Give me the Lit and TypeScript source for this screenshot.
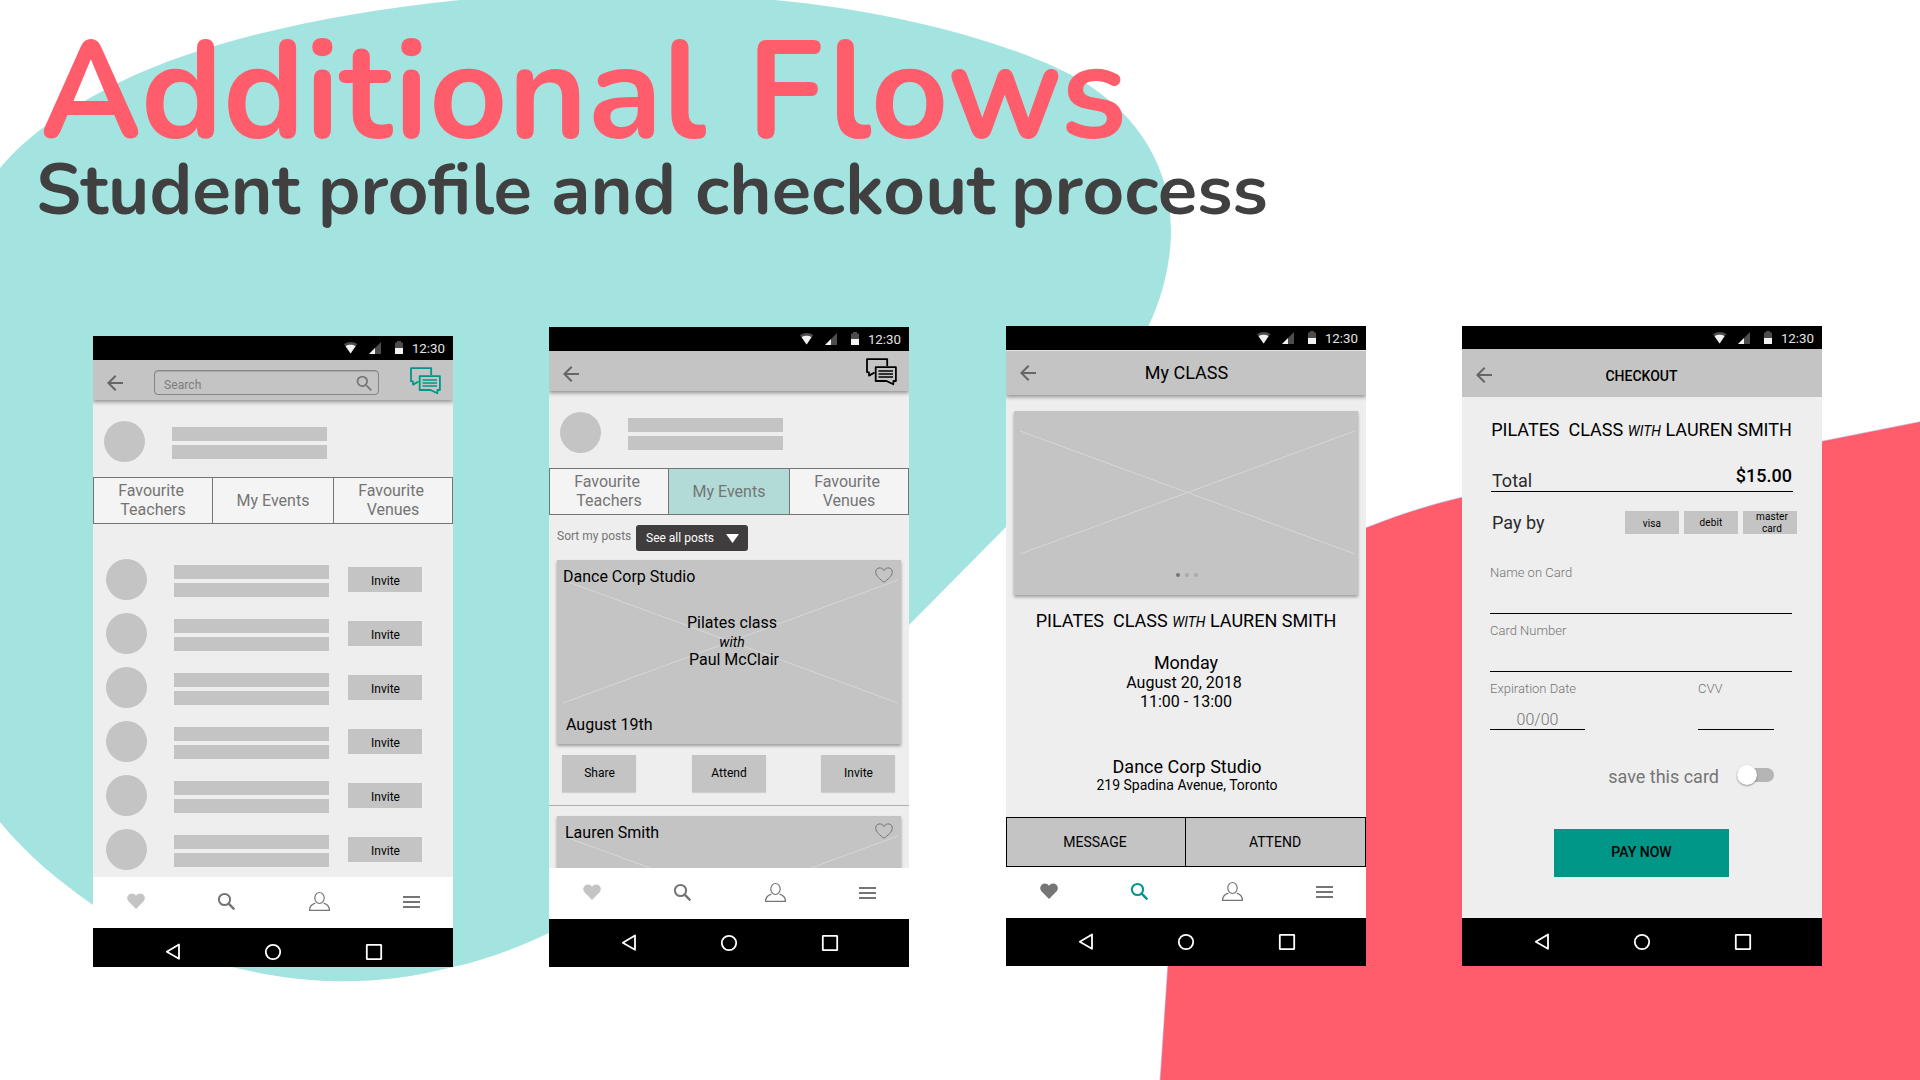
import { LitElement, html, svg, css, nothing, TemplateResult } from "lit";
import { customElement, property } from "lit/decorators.js";

const arrow = svg`<path d="M20 11H7.83l5.59-5.59L12 4l-8 8 8 8 1.41-1.41L7.83 13H20z"/>`;
const magnifier = svg`<path d="M15.5 14h-.79l-.28-.27A6.471 6.471 0 0 0 16 9.5 6.5 6.5 0 1 0 9.5 16c1.61 0 3.09-.59 4.23-1.57l.27.28v.79l5 4.99L20.49 19zm-6 0C7.01 14 5 11.99 5 9.5S7.01 5 9.5 5 14 7.01 14 9.5 11.99 14 9.5 14z"/>`;

@customElement("status-bar")
class StatusBar extends LitElement {
  static styles = css`
    :host { display: block; height: 100%; background: #000; }
    .bar { height: 24px; display: flex; justify-content: flex-end; padding-right: 8px; align-items: center; font: 13.3px/24px Roboto, "Liberation Sans", sans-serif; color: #e4e4e4; }
    .bar span { padding-top: 1px; }
    svg { width: 66px; height: 24px; margin-right: 3.5px; flex: none; }
  `;
  render() {
    return html`<div class="bar">
      <svg viewBox="0 0 66 24">
        <path d="M2 8.300C6 5.200 12 5.200 15.200 8.300L8.600 17.600z" fill="#4d4d4d"/>
        <path d="M3.600 10.200C6.500 8.300 10.800 8.300 13.500 10.200L8.600 17.600z" fill="#f2f2f2"/>
        <path d="M27 18 39 6v12z" fill="#4d4d4d"/>
        <path d="M27 18 33 12v6z" fill="#f2f2f2"/>
        <path d="M53 6.500h2V5h4v1.500h2V12h-8z" fill="#4d4d4d"/>
        <path d="M53 12h8v6h-8z" fill="#f2f2f2"/>
      </svg><span>12:30</span></div>`;
  }
}

@customElement("system-nav")
class SystemNav extends LitElement {
  static styles = css`
    :host { display: block; background: #000; }
    svg { display: block; width: 360px; height: 48px; }
  `;
  render() {
    return html`<svg viewBox="0 0 360 48" fill="none" stroke="#fff" stroke-width="1.800" stroke-linejoin="round">
      <path d="M86 16.500v14.300L73.800 23.700z"/><circle cx="180" cy="24" r="7.200"/><rect x="273.800" y="16.800" width="14.400" height="14.400" rx=".5"/>
    </svg>`;
  }
}

@customElement("tab-nav")
class TabNav extends LitElement {
  @property() heart = "#c4c4c4";
  @property() search = "#757575";
  static styles = css`
    :host { display: block; height: 51px; background: #fff; }
    .icons { display: block; width: 360px; height: 51px; }
  `;
  render() {
    return html`<svg class="icons" viewBox="0 0 360 51">
      <g transform="translate(32 13.400) scale(.92)" fill=${this.heart}><path d="M12 20.300 3.700 11.700C1.900 9.500 2 6.500 4 4.600 6.400 2.500 10 2.800 12 5.800 14 2.800 17.600 2.500 20 4.600 22 6.500 22.100 9.500 20.300 11.700z"/></g>
      <g fill="none" stroke=${this.search} stroke-width="2"><circle cx="131.500" cy="22.500" r="5.600"/><path d="M135.700 26.700 141.300 32.300" stroke-width="2.400"/></g>
      <g fill="none" stroke="#757575" stroke-width="1.200"><ellipse cx="226.500" cy="21" rx="4.700" ry="5.500"/><path d="M222.400 26.200C218 27.500 216.600 29.500 216.600 33.300H236.400C236.400 29.500 235 27.500 230.600 26.200"/></g>
      <path d="M310 19h17v2h-17zm0 5h17v2h-17zm0 5h17v2h-17z" fill="#757575"/>
    </svg>`;
  }
}

@customElement("app-root")
class AppRoot extends LitElement {
  static styles = css`
    :host { display: block; }
    * { box-sizing: border-box; }
    .slide { position: relative; width: 1920px; height: 1080px; overflow: hidden; background: #fff; font-family: Roboto, "Liberation Sans", sans-serif; color: #000; }
    .backdrop { position: absolute; inset: 0; }
    .content { position: relative; }
    .heads { display: block; width: 1400px; height: 326px; overflow: visible; }
    .heads text { font-family: Nunito, Lato, sans-serif; font-weight: 700; }
    .phones { display: flex; align-items: flex-start; padding-left: 93px; gap: 96px; height: 660px; }
    .phone { width: 360px; height: 640px; background: #eee; display: flex; flex-direction: column; flex: none; overflow: hidden; }
    .p1 { height: 631px; margin-top: 10px; }
    .p2 { margin-top: 1px; }
    .p3 { margin-left: 1px; }
    .status { height: 24px; flex: none; }
    .status4 { height: 23px; }
    system-nav { flex: none; height: 48px; overflow: hidden; }
    .p1 system-nav { height: 39px; }
    tab-nav { flex: none; }
    .appbar { background: #c4c4c4; height: 40px; flex: none; display: flex; align-items: center; box-shadow: 0 2px 4px rgba(0,0,0,.4); position: relative; padding: 6px 12px 0 10px; }
    .back { width: 24px; height: 24px; fill: #666; flex: none; }
    .search { width: 225px; height: 25px; margin: 0 0 1px 27px; border: 1px solid #858585; border-radius: 4px; box-shadow: inset 0 1px 1px #aaa; display: flex; align-items: center; justify-content: space-between; padding: 0 3px 0 9px; color: #7c7c7c; font-size: 12px; letter-spacing: .1px; }
    .search span { padding-top: 4px; }
    .search svg { width: 21px; height: 21px; fill: #777; margin-top: 1px; }
    .chat { width: 32px; height: 30px; margin-left: auto; margin-top: -4px; color: #009688; }
    .dark { color: #000; }
    .main { flex: 1; min-height: 0; overflow: hidden; display: flex; flex-direction: column; }
    .profile { display: flex; align-items: center; gap: 27px; padding-left: 11px; margin-top: 21px; height: 41px; flex: none; }
    .avatar { width: 41px; height: 41px; border-radius: 50%; background: #c4c4c4; }
    .lines { width: 155px; display: flex; flex-direction: column; gap: 4px; margin-top: 3px; }
    .lines i { height: 14px; background: #c4c4c4; }
    .tabs { display: grid; grid-template-columns: 118px 121px 119px; border: 1px solid #757575; height: 47px; margin-top: 15px; flex: none; color: #757575; font-size: 16px; line-height: 19px; text-align: center; }
    .tabs div { background: #f4f4f4; display: flex; align-items: center; justify-content: center; padding-bottom: 1px; }
    .tabs div + div { border-left: 1px solid #757575; }
    .tabs .on { background: #b2dbd7; }
    .people { display: flex; flex-direction: column; gap: 13px; padding: 35px 0 0 13px; }
    .person { display: flex; height: 41px; gap: 27px; flex: none; }
    .person .lines { margin-top: 6px; }
    .btn { width: 74px; height: 25px; background: #c4c4c4; font-size: 12px; line-height: 28px; text-align: center; padding-left: 1px; }
    .person .btn { margin: 8px 0 0 -8px; }
    .sort { display: flex; height: 26px; margin: 10px 0 9px 8px; flex: none; font-size: 12px; color: #757575; line-height: 23px; }
    .sort span { width: 79px; }
    .drop { width: 112px; background: #403d3e; border-radius: 3px; color: #fff; display: flex; justify-content: space-between; align-items: center; padding: 1px 9px 0 10px; }
    .drop svg { width: 13px; height: 9px; fill: #fff; }
    .card { position: relative; width: 344px; height: 184px; margin-left: 8px; background: #c4c4c4; box-shadow: 0 2px 3px rgba(0,0,0,.35); flex: none; }
    .cross { position: absolute; inset: 0; width: 344px; height: 184px; }
    .card-body { position: relative; display: flex; flex-direction: column; height: 100%; font-size: 16px; line-height: 18px; padding: 8px 8px 10px 6px; }
    .row { display: flex; justify-content: space-between; }
    .inset { padding-left: 2px; }
    .fav { width: 18px; height: 16px; margin-top: -1px; }
    .mid { text-align: center; margin: 28px 0 0 8px; }
    .mid em { display: block; font-size: 14px; line-height: 20px; margin-bottom: -1px; }
    .mid span { padding-left: 4px; }
    .when { margin-top: auto; padding-left: 3px; }
    .actions { display: flex; justify-content: space-between; padding: 11px 14px 0 13px; height: 62px; border-bottom: 1px solid #aeaeae; flex: none; margin-bottom: 10px; }
    .actions .btn { height: 37px; line-height: 36px; box-shadow: 0 1px 1px rgba(0,0,0,.12); }
    .bar3 { height: 44px; padding-top: 0; margin-top: 1px; }
    .title { flex: 1; text-align: center; font-size: 18px; padding: 0 21px 1px 0; }
    .t4 { font-size: 14px; font-weight: 500; padding: 2px 23px 0 0; }
    .bar4 { height: 48px; box-shadow: none; padding-top: 4px; }
    .hero { margin-top: 16px; margin-bottom: 15px; }
    .dots { position: absolute; left: 162px; top: 162px; display: flex; gap: 5px; }
    .dots i { width: 4px; height: 4px; border-radius: 50%; background: #aaa; }
    .dots i:first-child { background: #757575; }
    .class { font-size: 18px; line-height: 22px; text-align: center; white-space: pre; flex: none; }
    .class em { font-size: 14px; }
    .details { text-align: center; flex: 1; font-size: 16px; line-height: 19px; padding-top: 19px; }
    .details .big { font-size: 18px; line-height: 21px; }
    .venue { padding: 45px 0 0 2px; font-size: 14px; line-height: 16px; }
    .two { display: grid; grid-template-columns: 178px 180px; height: 50px; border: 1px solid #000; background: #c4c4c4; font-size: 14px; text-align: center; line-height: 49px; flex: none; }
    .two div { padding-right: 2px; }
    .two div + div { border-left: 1px solid #000; padding-right: 1px; }
    .form { padding: 22px 25px 0 28px; }
    .form .class { margin-left: -4px; }
    .total { display: flex; justify-content: space-between; flex: none; width: 302px; height: 42px; border-bottom: 1px solid #000; font-size: 18px; margin: 8px 0 0 1px; padding: 15px 1px 0 1px; color: #2b2b2b; }
    .total span { line-height: 32px; }
    .total b { font-weight: 500; line-height: 22px; color: #000; }
    .pay { display: flex; margin-top: 19px; height: 23px; gap: 5px; font-size: 18px; color: #2b2b2b; line-height: 24px; flex: none; }
    .pay span { width: 130px; padding-left: 2px; }
    .pay div { width: 54px; background: #c4c4c4; color: #000; font-size: 10px; line-height: 12px; text-align: center; display: flex; align-items: center; justify-content: center; letter-spacing: .1px; }
    .pay .low { padding-top: 2px; }
    .pay .wide { padding-left: 4px; }
    .label { font-size: 13px; font-weight: 300; color: #757575; line-height: 18px; }
    .field { width: 302px; border-bottom: 1px solid #000; flex: none; }
    .f1 { height: 50px; margin: 30px 0 0 0; }
    .f2 { height: 50px; margin-top: 8px; }
    .pair { display: flex; justify-content: space-between; width: 284px; margin-top: 9px; height: 49px; flex: none; }
    .pair .label { line-height: 16px; }
    .exp { width: 95px; border-bottom: 1px solid #000; }
    .cvv { width: 76px; border-bottom: 1px solid #000; }
    .exp p { margin: 13px 0 0; font-size: 16px; line-height: 20px; text-align: center; font-weight: 300; color: #757575; }
    .save { display: flex; justify-content: flex-end; width: 284px; margin-top: 35px; font-size: 18px; line-height: 24px; color: #757575; gap: 18px; height: 24px; flex: none; }
    .toggle { width: 37px; height: 14px; border-radius: 7px; background: #b5b5b5; margin-top: 3px; }
    .toggle i { display: block; width: 20px; height: 20px; border-radius: 50%; background: #fff; margin-top: -3px; box-shadow: 0 1px 2px rgba(0,0,0,.4); }
    .paynow { width: 175px; height: 48px; background: #009688; margin: 40px 0 0 64px; text-align: center; font-size: 14px; line-height: 46px; font-weight: 500; flex: none; }
  `;

  private backIcon() { return html`<svg class="back" viewBox="0 0 24 24">${arrow}</svg>`; }

  private chatIcon(dark = false) {
    return html`<svg class="chat ${dark ? "dark" : ""}" viewBox="0 0 32 30" fill="none" stroke="currentColor" stroke-width="1.800" stroke-linejoin="round">
      <path d="M22.200 9V2.200H2V15.200L4 15.400V18.600L9.600 15.500"/><path d="M10.700 10.200H30.900V24H28.500L28.300 27.300 21.500 24H10.700z"/><path d="M13.500 14h14.500M13.500 17h14.500M13.500 20h14.500" stroke-width="1.400"/>
    </svg>`;
  }

  private lines() { return html`<div class="lines"><i></i><i></i></div>`; }
  private profile() { return html`<div class="profile"><div class="avatar"></div>${this.lines()}</div>`; }
  private tabs(active = false) {
    return html`<div class="tabs"><div>Favourite&nbsp;<br>Teachers</div><div class=${active ? "on" : ""}>My Events</div><div>Favourite&nbsp;<br>Venues</div></div>`;
  }
  private cross() {
    return html`<svg class="cross" viewBox="0 0 344 184" fill="none" stroke="#d6d6d6"><path d="M6 20 341 143M341 20 6 143"/></svg>`;
  }
  private card(title: string, full: boolean) {
    return html`<div class="card">${this.cross()}<div class="card-body">
      <div class="row"><span class=${full ? "" : "inset"}>${title}</span><svg class="fav" viewBox="0 0 18 16" fill="none" stroke="#757575"><path d="M9 15.300C5.500 12.500 .7 9.200 .7 5 .7 .3 7 -.6 9 3.600 11 -.6 17.300 .3 17.300 5 17.300 9.200 12.500 12.500 9 15.300z"/></svg></div>
      ${full ? html`<div class="mid">Pilates class<em>with</em><span>Paul McClair</span></div><div class="when">August 19th</div>` : nothing}
    </div></div>`;
  }
  private classTitle() { return html`<div class="class">PILATES  CLASS <em>WITH</em> LAUREN SMITH</div>`; }

  private word(text: string, x: number, y: number, size: number, length: number, fill: string) {
    return svg`<text x=${x} y=${y} font-size=${size} fill=${fill} textLength=${length} lengthAdjust="spacingAndGlyphs">${text}</text>`;
  }

  render(): TemplateResult {
    return html`<div class="slide">
      <svg class="backdrop" viewBox="0 0 1920 1080">
        <path fill="#a4e4e0" d="M0 168C30 132 70 107 120 82C205 41 325 14 460 0C550 -10 680 -10 775 0C880 10 985 35 1057 68C1130 101 1171 160 1171 230C1171 262 1163 295 1149 325C1118 395 1065 468 1006 527L909 625C800 740 700 860 549 933C517 948 485 960 453 967C380 986 310 986 234 967.500C182 954 135 932 93 905C60 882 28 856 0 822z"/>
        <path fill="#ff5c6c" stroke="#c9c6ec" stroke-width="1.500" paint-order="stroke" d="M1160 1085L1168 966C1185 770 1210 585 1366 528C1396 516 1430 505 1462 497.500C1580 470 1700 460 1822 441.500L1925 421V1085z"/>
      </svg>
      <div class="content">
        <svg class="heads" viewBox="0 0 1400 326">
          ${this.word("Additional", 40, 138, 138, 666, "#ff5c6c")}
          ${this.word("Flows", 747, 138, 138, 380, "#ff5c6c")}
          ${this.word("Student", 36, 214, 71, 264, "#404040")}
          ${this.word("profile", 318, 214, 71, 214, "#404040")}
          ${this.word("and", 551, 214, 71, 125, "#404040")}
          ${this.word("checkout", 695, 214, 71, 300, "#404040")}
          ${this.word("process", 1011, 214, 71, 257, "#404040")}
        </svg>
        <div class="phones">
          <div class="phone p1">
            <status-bar class="status"></status-bar>
            <div class="appbar">${this.backIcon()}<div class="search"><span>Search</span><svg viewBox="0 0 24 24">${magnifier}</svg></div>${this.chatIcon()}</div>
            <div class="main">${this.profile()}${this.tabs()}
              <div class="people">${Array.from({ length: 6 }, () => html`<div class="person"><div class="avatar"></div>${this.lines()}<div class="btn">Invite</div></div>`)}</div>
            </div>
            <tab-nav></tab-nav><system-nav></system-nav>
          </div>
          <div class="phone p2">
            <status-bar class="status"></status-bar>
            <div class="appbar">${this.backIcon()}${this.chatIcon(true)}</div>
            <div class="main">${this.profile()}${this.tabs(true)}
              <div class="sort"><span>Sort my posts</span><div class="drop">See all posts<svg viewBox="0 0 13 9"><path d="M0 0h13L6.500 9z"/></svg></div></div>
              ${this.card("Dance Corp Studio", true)}
              <div class="actions"><div class="btn">Share</div><div class="btn">Attend</div><div class="btn">Invite</div></div>
              ${this.card("Lauren Smith", false)}
            </div>
            <tab-nav></tab-nav><system-nav></system-nav>
          </div>
          <div class="phone p3">
            <status-bar class="status"></status-bar>
            <div class="appbar bar3">${this.backIcon()}<div class="title">My CLASS</div></div>
            <div class="main">
              <div class="card hero">${this.cross()}<div class="dots"><i></i><i></i><i></i></div></div>
              ${this.classTitle()}
              <div class="details"><div class="big">Monday</div>August 20, 2018&nbsp;<br>11:00 - 13:00
                <div class="venue"><div class="big">Dance Corp Studio</div>219 Spadina Avenue, Toronto</div></div>
              <div class="two"><div>MESSAGE</div><div>ATTEND</div></div>
            </div>
            <tab-nav heart="#757575" search="#009688"></tab-nav><system-nav></system-nav>
          </div>
          <div class="phone">
            <status-bar class="status status4"></status-bar>
            <div class="appbar bar4">${this.backIcon()}<div class="title t4">CHECKOUT</div></div>
            <div class="main form">${this.classTitle()}
              <div class="total"><span>Total</span><b>$15.00</b></div>
              <div class="pay"><span>Pay by</span><div class="low">visa</div><div>debit</div><div class="wide">master<br>card</div></div>
              <div class="field f1 label">Name on Card</div>
              <div class="field f2 label">Card Number</div>
              <div class="pair"><div class="exp label">Expiration Date<p>00/00</p></div><div class="cvv label">CVV</div></div>
              <div class="save">save this card<div class="toggle"><i></i></div></div>
              <div class="paynow">PAY NOW</div>
            </div>
            <system-nav></system-nav>
          </div>
        </div>
      </div>
    </div>`;
  }
}
